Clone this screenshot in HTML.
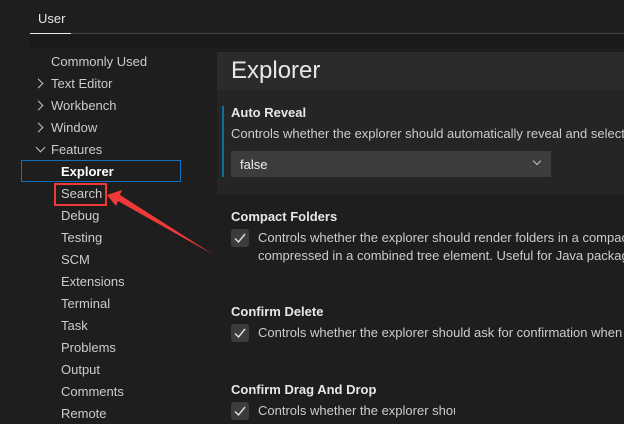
<!DOCTYPE html>
<html><head><style>
body{margin:0;width:624px;height:424px;background:#1e1e1e;overflow:hidden;position:relative;font-family:"Liberation Sans",sans-serif;font-size:13px;color:#cccccc}
.a{position:absolute;white-space:nowrap}
.t{margin-top:1px}
.chev{position:absolute;width:6px;height:6px;border-right:1.3px solid #c5c5c5;border-bottom:1.3px solid #c5c5c5}
.cb{position:absolute;width:18px;height:18px;background:#3c3c3c;border-radius:3px}
.cb svg{position:absolute;left:2px;top:2px}
</style></head><body>
<div class="a t" style="left:38px;top:10px;color:#e7e7e7">User</div>
<div class="a" style="left:30px;top:33px;width:41px;height:1px;background:#e7e7e7"></div>
<div class="a" style="left:71px;top:33px;width:553px;height:1px;background:#444"></div>
<div class="a" style="left:30px;top:34px;width:594px;height:15px;background:#1a1a1a"></div>
<div class="a" style="left:217px;top:52px;width:407px;height:38px;background:#2b2b2b"></div>
<div class="a t" style="left:231px;top:56px;font-size:24px;color:#e7e7e7">Explorer</div>
<div class="a" style="left:217px;top:90px;width:407px;height:105px;background:#252525"></div>
<div class="a" style="left:222px;top:106px;width:2px;height:71px;background:#0e6f9c"></div>
<div class="a t" style="left:231px;top:104px;font-weight:bold;color:#e7e7e7">Auto Reveal</div>
<div class="a t" style="left:231px;top:125px">Controls whether the explorer should automatically reveal and select</div>
<div class="a" style="left:231px;top:151px;width:320px;height:26px;background:#3c3c3c"></div>
<div class="a t" style="left:240px;top:156px;color:#f0f0f0">false</div>
<div class="chev" style="left:534px;top:158px;transform:rotate(45deg);width:5px;height:5px"></div>

<div class="a t" style="left:231px;top:208px;font-weight:bold;color:#e7e7e7">Compact Folders</div>
<div class="cb" style="left:231px;top:229px"><svg width="14" height="14" viewBox="0 0 14 14"><path d="M2 7.5L5.5 11L12 3" fill="none" stroke="#e0e0e0" stroke-width="1.4"/></svg></div>
<div class="a t" style="left:258px;top:229px">Controls whether the explorer should render folders in a compact</div>
<div class="a t" style="left:258px;top:247px">compressed in a combined tree element. Useful for Java packages</div>
<div class="a t" style="left:231px;top:303px;font-weight:bold;color:#e7e7e7">Confirm Delete</div>
<div class="cb" style="left:231px;top:324px"><svg width="14" height="14" viewBox="0 0 14 14"><path d="M2 7.5L5.5 11L12 3" fill="none" stroke="#e0e0e0" stroke-width="1.4"/></svg></div>
<div class="a t" style="left:258px;top:324px">Controls whether the explorer should ask for confirmation when</div>
<div class="a t" style="left:231px;top:381px;font-weight:bold;color:#e7e7e7">Confirm Drag And Drop</div>
<div class="cb" style="left:231px;top:402px"><svg width="14" height="14" viewBox="0 0 14 14"><path d="M2 7.5L5.5 11L12 3" fill="none" stroke="#e0e0e0" stroke-width="1.4"/></svg></div>
<div class="a t" style="left:258px;top:402px;width:197px;overflow:hidden">Controls whether the explorer should</div>

<div class="a t" style="left:51px;top:53px">Commonly Used</div>
<div class="chev" style="left:35px;top:80px;transform:rotate(-45deg)"></div>
<div class="a t" style="left:51px;top:75px">Text Editor</div>
<div class="chev" style="left:35px;top:102px;transform:rotate(-45deg)"></div>
<div class="a t" style="left:51px;top:97px">Workbench</div>
<div class="chev" style="left:35px;top:124px;transform:rotate(-45deg)"></div>
<div class="a t" style="left:51px;top:119px">Window</div>
<div class="chev" style="left:37px;top:144px;transform:rotate(45deg)"></div>
<div class="a t" style="left:51px;top:141px">Features</div>
<div class="a" style="left:21px;top:160px;width:158px;height:20px;border:1px solid #0e70c0"></div>
<div class="a t" style="left:61px;top:163px;font-weight:bold;color:#fff">Explorer</div>
<div class="a t" style="left:61px;top:185px">Search</div>
<div class="a t" style="left:61px;top:207px">Debug</div>
<div class="a t" style="left:61px;top:229px">Testing</div>
<div class="a t" style="left:61px;top:251px">SCM</div>
<div class="a t" style="left:61px;top:273px">Extensions</div>
<div class="a t" style="left:61px;top:295px">Terminal</div>
<div class="a t" style="left:61px;top:317px">Task</div>
<div class="a t" style="left:61px;top:339px">Problems</div>
<div class="a t" style="left:61px;top:361px">Output</div>
<div class="a t" style="left:61px;top:383px">Comments</div>
<div class="a t" style="left:61px;top:405px">Remote</div>

<div class="a" style="left:54px;top:183px;width:49px;height:19px;border:2px solid #f03a3a"></div>
<svg class="a" style="left:0;top:0" width="624" height="424"><path d="M107 195 L122 190 L120 195 L214 255 L118 201 L116 206 Z" fill="#f03a3a"/></svg>
</body></html>
